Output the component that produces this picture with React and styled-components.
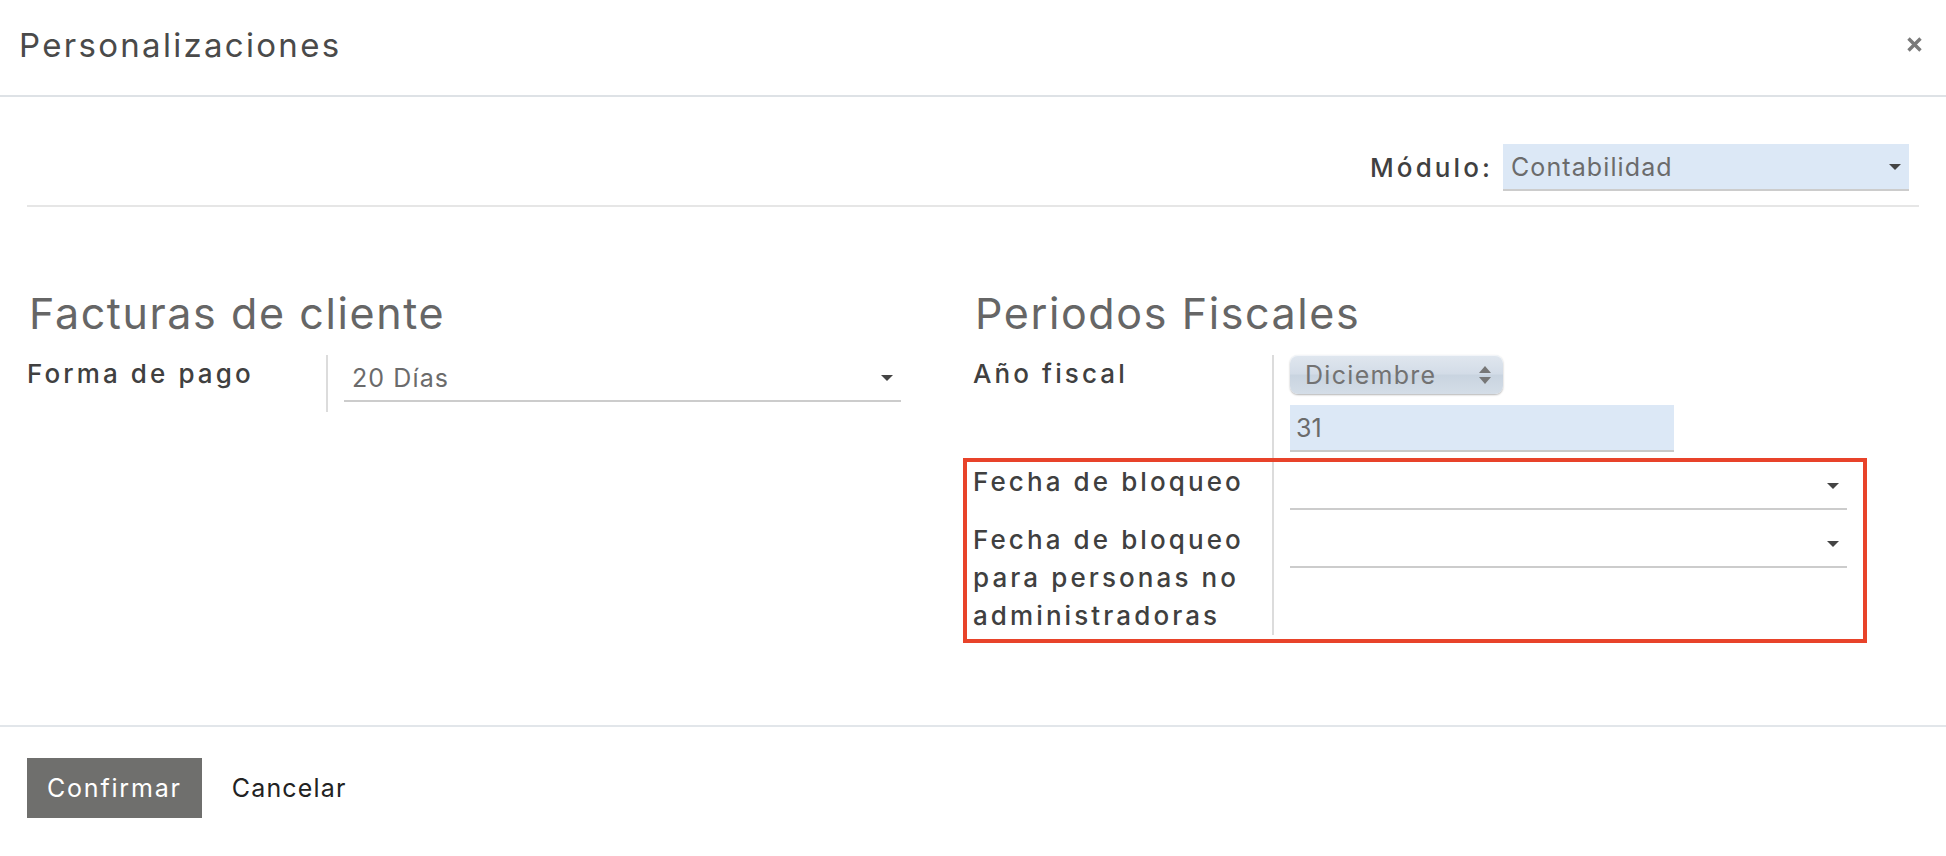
import React from 'react';
import styled, { createGlobalStyle } from 'styled-components';

const GlobalStyle = createGlobalStyle`
  html, body {
    margin: 0;
    padding: 0;
    background: #ffffff;
  }
  body {
    font-family: Inter, "Open Sans", "Liberation Sans", sans-serif;
    color: #4c4c4c;
  }
  * {
    box-sizing: border-box;
  }
`;

const Dialog = styled.div`
  display: flex;
  flex-direction: column;
  min-height: 100vh;
  width: 100%;
`;

const Header = styled.header`
  height: 97px;
  display: flex;
  align-items: center;
  justify-content: space-between;
  padding: 0 23px 6px 19px;
  border-bottom: 2px solid #dee2e6;
`;

const Title = styled.h4`
  margin: 0;
  font-size: 33px;
  font-weight: 400;
  letter-spacing: 2.3px;
  color: #4a4a4a;
`;

const CloseButton = styled.button`
  display: flex;
  align-items: center;
  justify-content: center;
  width: 17px;
  height: 17px;
  padding: 0;
  border: none;
  background: none;
  color: #7a7a7a;
  cursor: pointer;
`;

const Body = styled.main`
  flex: 1;
  padding: 0 27px;
`;

const ModuleBar = styled.div`
  display: flex;
  justify-content: flex-end;
  align-items: center;
  gap: 10px;
  padding: 47px 10px 14px 0;
  border-bottom: 2px solid #e6e6e6;
`;

const Label = styled.label`
  font-size: 26px;
  line-height: 38px;
  font-weight: 500;
  letter-spacing: 3.1px;
  color: #404040;
`;

const Select = styled.div`
  display: flex;
  align-items: center;
  justify-content: space-between;
  width: ${p => p.width || 'auto'};
  height: 47px;
  padding: 0 8px 0 8px;
  background: ${p => (p.filled ? '#dce8f6' : 'transparent')};
  border-bottom: 2px solid #cccccc;
  font-size: 25px;
  letter-spacing: 1.1px;
  color: #6b6b6b;
`;

const Caret = styled.span`
  width: 0;
  height: 0;
  border-left: 6.5px solid transparent;
  border-right: 6.5px solid transparent;
  border-top: 6.5px solid #444444;
`;

const Columns = styled.div`
  display: grid;
  grid-template-columns: 1fr 1fr;
  padding-top: 82px;
`;

const Section = styled.section`
  display: flex;
  flex-direction: column;
`;

const SectionTitle = styled.h2`
  margin: 0 0 17px 2px;
  font-size: 43px;
  line-height: 49px;
  font-weight: 400;
  letter-spacing: 1.6px;
  color: #666666;
`;

const FieldRow = styled.div`
  display: grid;
  grid-template-columns: 299px 1fr;
`;

const FieldCell = styled.div`
  display: flex;
  flex-direction: column;
  align-items: flex-start;
  gap: 11px;
  padding: 0 72px ${p => p.bottom || 10}px 16px;
  border-left: 2px solid #dcdcdc;

  & > ${Select} {
    align-self: stretch;
  }
`;

const NativeSelect = styled.div`
  display: flex;
  align-items: center;
  justify-content: space-between;
  width: 213px;
  height: 39px;
  padding: 0 12px 0 15px;
  border-radius: 8px;
  background: linear-gradient(180deg, #e0e7ef 0%, #d3dce7 48%, #c9d4e0 52%, #d4dde7 100%);
  box-shadow: 0 1px 2px rgba(0, 0, 0, 0.3), inset 0 1px 0 rgba(255, 255, 255, 0.6);
  font-size: 25px;
  letter-spacing: 1.3px;
  color: #727272;
`;

const NumberInput = styled.div`
  display: flex;
  align-items: center;
  width: 384px;
  height: 47px;
  padding: 0 6px;
  background: #dce8f6;
  border-bottom: 2px solid #c8c8c8;
  font-size: 25px;
  color: #6b6b6b;
`;

const Highlight = styled.div`
  position: relative;

  &::after {
    content: '';
    position: absolute;
    top: -5px;
    bottom: -8px;
    left: -10px;
    right: 52px;
    border: 4px solid #e8432a;
    pointer-events: none;
  }
`;

const Footer = styled.footer`
  display: flex;
  align-items: flex-start;
  gap: 10px;
  height: 131px;
  padding: 31px 27px 0;
  border-top: 2px solid #e2e6ea;
`;

const PrimaryButton = styled.button`
  height: 60px;
  padding: 0 20px;
  border: none;
  background: #6f6f6d;
  color: #ffffff;
  font-family: inherit;
  font-size: 25px;
  letter-spacing: 1.8px;
  cursor: pointer;
`;

const LinkButton = styled.button`
  height: 60px;
  padding: 0 20px;
  border: none;
  background: none;
  color: #222222;
  font-family: inherit;
  font-size: 25px;
  letter-spacing: 1.2px;
  cursor: pointer;
`;

const SpinArrows = () => (
  <svg width="12" height="18" viewBox="0 0 12 18">
    <path d="M6 0 L12 7 L0 7 Z" fill="#777777" />
    <path d="M0 11 L12 11 L6 18 Z" fill="#777777" />
  </svg>
);

const CloseIcon = () => (
  <svg width="17" height="17" viewBox="0 0 17 17">
    <path d="M2.5 2.5 L14.5 14.5 M14.5 2.5 L2.5 14.5" stroke="currentColor" strokeWidth="3.4" />
  </svg>
);

const App = () => {
  return (
    <Dialog>
      <GlobalStyle />
      <Header>
        <Title>Personalizaciones</Title>
        <CloseButton aria-label="Cerrar">
          <CloseIcon />
        </CloseButton>
      </Header>

      <Body>
        <ModuleBar>
          <Label>Módulo:</Label>
          <Select filled width="406px">
            <span>Contabilidad</span>
            <Caret />
          </Select>
        </ModuleBar>

        <Columns>
          <Section>
            <SectionTitle>Facturas de cliente</SectionTitle>
            <FieldRow>
              <Label>Forma de pago</Label>
              <FieldCell>
                <Select>
                  <span>20 Días</span>
                  <Caret />
                </Select>
              </FieldCell>
            </FieldRow>
          </Section>

          <Section>
            <SectionTitle>Periodos Fiscales</SectionTitle>
            <FieldRow>
              <Label>Año fiscal</Label>
              <FieldCell bottom={11}>
                <NativeSelect>
                  <span>Diciembre</span>
                  <SpinArrows />
                </NativeSelect>
                <NumberInput>31</NumberInput>
              </FieldCell>
            </FieldRow>
            <Highlight>
              <FieldRow>
                <Label>Fecha de bloqueo</Label>
                <FieldCell bottom={11}>
                  <Select>
                    <span />
                    <Caret />
                  </Select>
                </FieldCell>
              </FieldRow>
              <FieldRow>
                <Label>Fecha de bloqueo para personas no administradoras</Label>
                <FieldCell bottom={3}>
                  <Select>
                    <span />
                    <Caret />
                  </Select>
                </FieldCell>
              </FieldRow>
            </Highlight>
          </Section>
        </Columns>
      </Body>

      <Footer>
        <PrimaryButton>Confirmar</PrimaryButton>
        <LinkButton>Cancelar</LinkButton>
      </Footer>
    </Dialog>
  );
};

export default App;
